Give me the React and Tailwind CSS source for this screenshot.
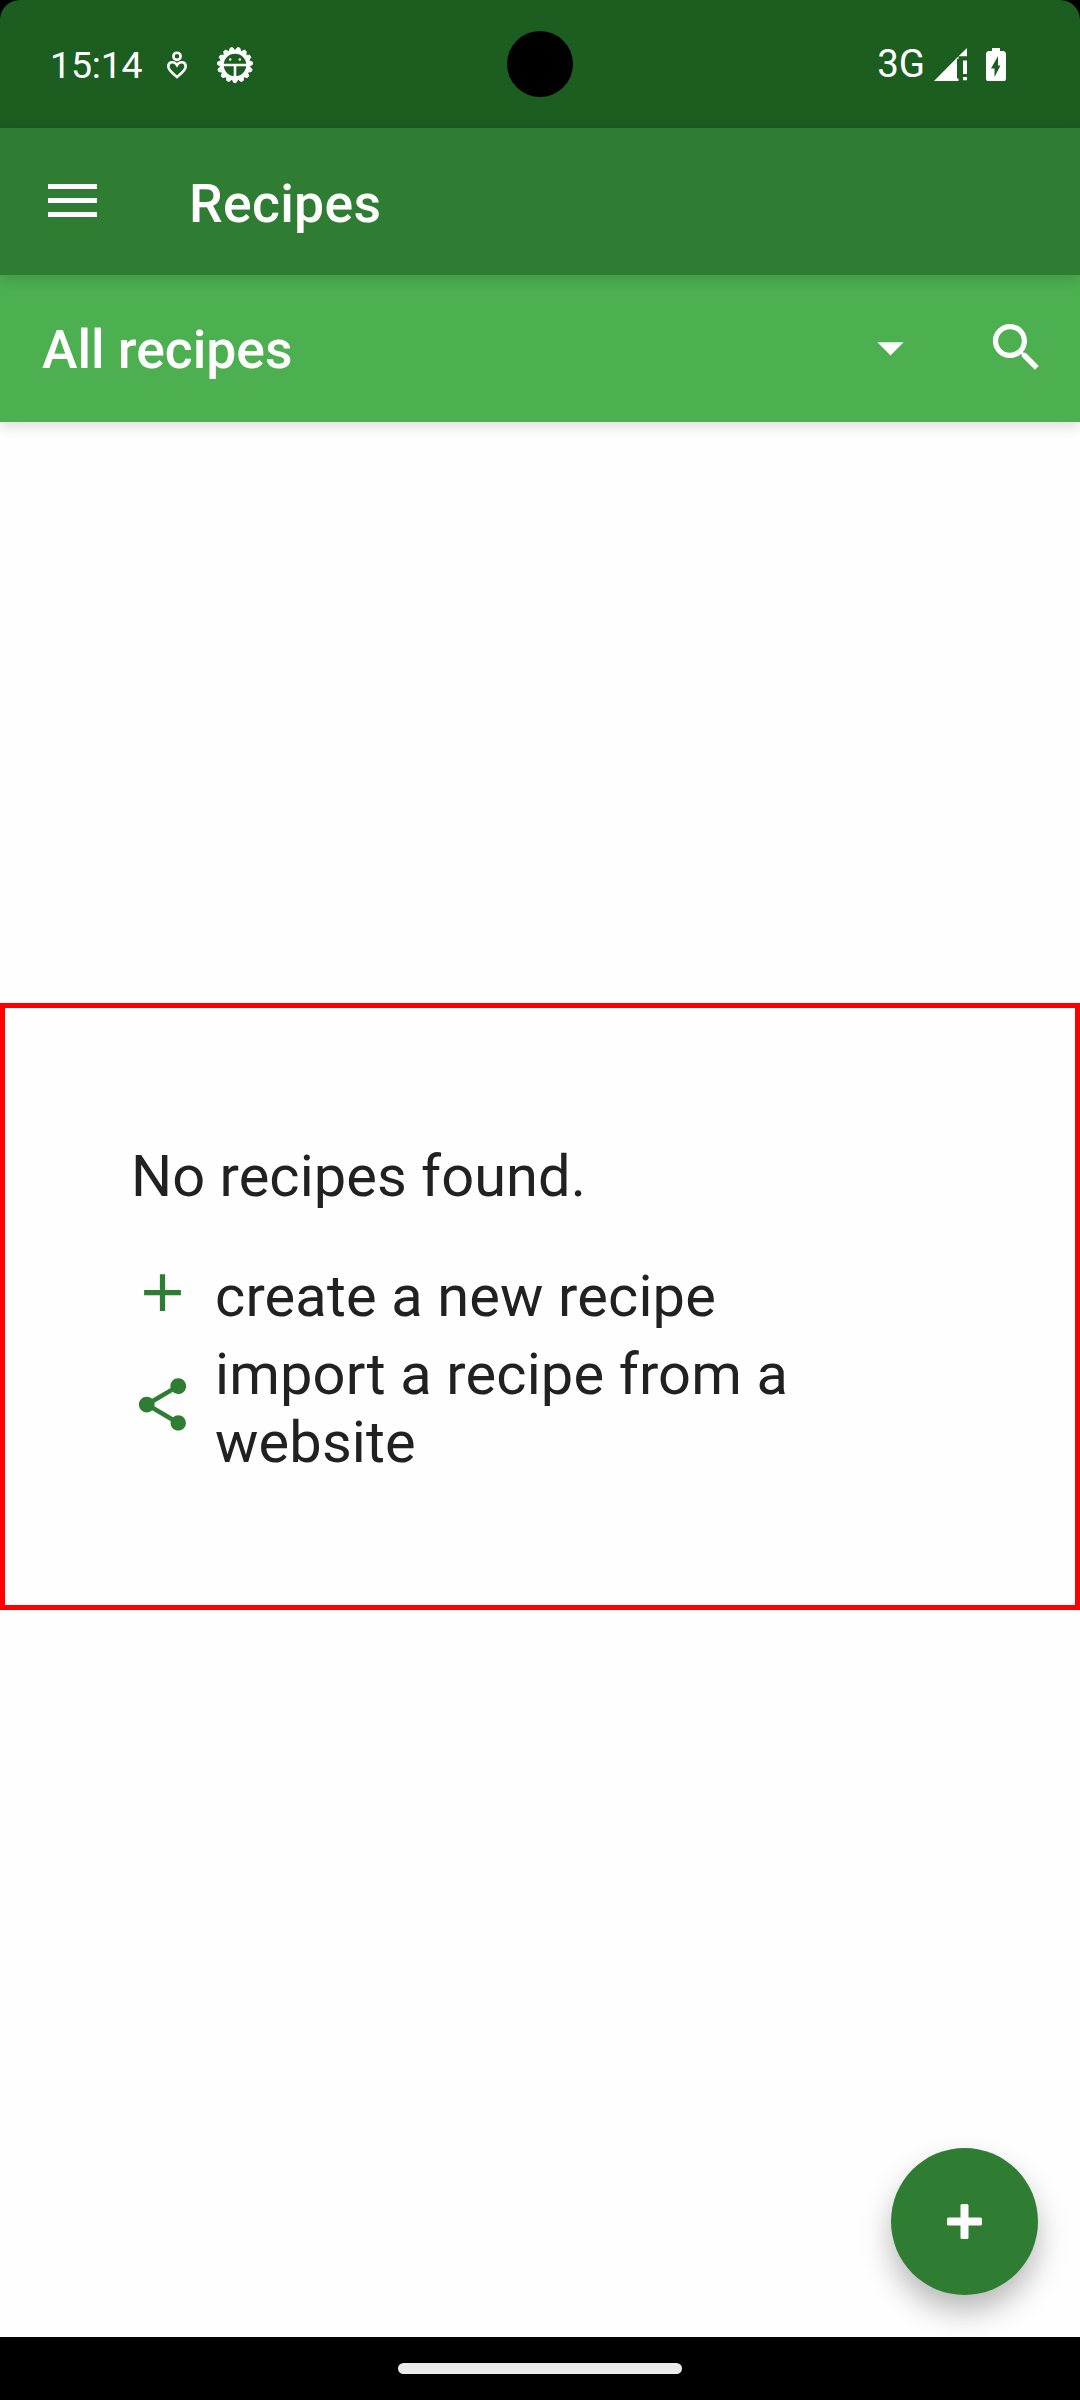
const GEAR_TEETH = Array.from({ length: 15 }, (_, i) => i * 24 + 12);

function StatusBar() {
  return (
    <header className="relative h-32 shrink-0 bg-black text-white">
      <div className="flex h-full items-center rounded-t-[20px] bg-[#1b5e20] pl-[50px] pr-[74px]">
        <span className="w-[95px] pt-1 text-[37.5px] leading-none tracking-[-0.2px]">15:14</span>
        <svg className="ml-[20px] mt-0.5 h-[30px] w-6" viewBox="0 0 24 30" fill="none" stroke="currentColor" strokeWidth="2.6">
          <circle cx="12" cy="6.300" r="3.600" />
          <path d="M12 27C9 24 3.300 20.500 3.300 16.500c0-4.800 6-6 8.700-1.300 2.700-4.700 8.700-3.500 8.700 1.300C20.700 20.500 15 24 12 27z" />
        </svg>
        <svg className="ml-[27px] mt-px h-[38px] w-[38px]" viewBox="-19 -19 38 38">
          {GEAR_TEETH.map((a) => (
            <path key={a} d="M-3.600-13L-1.200-17.600H1.200L3.600-13z" fill="currentColor" stroke="currentColor" strokeWidth="0.800" strokeLinejoin="round" transform={`rotate(${a})`} />
          ))}
          <circle r="13" fill="none" stroke="currentColor" strokeWidth="3.400" />
          <path d="M-12 0H12M0 0V13" stroke="currentColor" strokeWidth="2.600" />
          <circle cx="-4.800" cy="-5.500" r="1.200" fill="currentColor" />
          <circle cx="4.800" cy="-5.500" r="1.200" fill="currentColor" />
        </svg>
        <span className="ml-auto text-[38.5px] font-[450] leading-none">3G</span>
        <svg className="ml-[9px] h-[33px] w-[34px]" viewBox="0 0 34 33" fill="currentColor">
          <path d="M0 33L24.500 8.200V11H23V30.500H24.500V33zM24.500 8.200L33 0V8.200zM29 12.500h4v13.500h-4zM29 29h4v3.200h-4z" />
        </svg>
        <svg className="ml-[18px] h-[33px] w-5" viewBox="0 0 20 33" fill="currentColor" fillRule="evenodd">
          <path d="M6 0h8v3h4l2 2v26l-1 2H1l-1-2V5l2-2h4zM12 8L5 20.500h3.500v8.500L14.500 17.500H12z" />
        </svg>
      </div>
      <div className="absolute left-[507px] top-[31px] h-[66px] w-[66px] rounded-full bg-black" />
    </header>
  );
}

function AppBar() {
  return (
    <div className="relative z-20 flex h-[147px] shrink-0 items-center bg-[#2e7d32] pl-12 text-white shadow-[0_3px_14px_rgba(0,0,0,0.16)]">
      <svg className="mb-0.5 h-[33px] w-[49px]" viewBox="0 0 49 33" fill="currentColor">
        <path d="M0 0h49v5H0zM0 14h49v5H0zM0 28h49v5H0z" />
      </svg>
      <h1 className="ml-[92px] pt-1 text-[53.500px] font-medium leading-none tracking-[0.3px]">Recipes</h1>
    </div>
  );
}

function FilterBar() {
  return (
    <div className="relative z-10 flex h-[147px] shrink-0 items-center bg-[#4caf50] pl-[42px] pr-8 text-white shadow-[0_3px_14px_rgba(0,0,0,0.16)]">
      <span className="pt-[3px] text-[53.500px] font-medium leading-none tracking-[-0.05px]">All recipes</span>
      <svg className="mb-0.5 ml-auto h-[63px] w-[63px]" viewBox="0 0 24 24" fill="currentColor">
        <path d="M7 10l5 5 5-5z" />
      </svg>
      <svg className="mb-0.5 ml-[63px] h-[63px] w-[63px]" viewBox="0 0 24 24" fill="currentColor">
        <path d="M15.500 14h-.79l-.28-.27C15.410 12.590 16 11.110 16 9.500 16 5.910 13.090 3 9.500 3S3 5.910 3 9.500 5.910 16 9.500 16c1.610 0 3.090-.59 4.230-1.570l.27.28v.79l5 4.990L20.490 19l-4.990-5zm-6 0C7.010 14 5 11.990 5 9.500S7.010 5 9.500 5 14 7.010 14 9.500 11.990 14 9.500 14z" />
      </svg>
    </div>
  );
}

function EmptyState() {
  return (
    <section className="mt-[581px] h-[607px] border-[5px] border-[#ff0000] pl-[126px] pt-[134px] text-[57.75px] leading-[68px] tracking-[0.15px] text-[#212121]">
      <p className="tracking-[0.05px]">No recipes found.</p>
      <div className="mt-[52px] flex h-[68px] items-center">
        <svg className="mb-[7px] h-[63px] w-[63px] text-[#2e7d32]" viewBox="0 0 24 24" fill="currentColor">
          <path d="M19 13h-6v6h-2v-6H5v-2h6V5h2v6h6v2z" />
        </svg>
        <span className="ml-[21px]">create a new recipe</span>
      </div>
      <div className="mt-[10px] flex h-[136px] items-center">
        <svg className="mb-[8px] h-[63px] w-[63px] text-[#2e7d32]" viewBox="0 0 24 24" fill="currentColor">
          <path d="M18 16.080c-.76 0-1.440.3-1.960.77L8.910 12.700c.05-.23.09-.46.09-.7s-.04-.47-.09-.7l7.050-4.110c.54.5 1.250.81 2.040.81 1.660 0 3-1.340 3-3s-1.340-3-3-3-3 1.340-3 3c0 .24.04.47.09.7L8.040 9.810C7.500 9.310 6.790 9 6 9c-1.660 0-3 1.340-3 3s1.340 3 3 3c.79 0 1.500-.31 2.040-.81l7.120 4.160c-.05.21-.08.43-.08.65 0 1.610 1.310 2.920 2.920 2.920s2.920-1.310 2.920-2.920-1.310-2.920-2.920-2.920z" />
        </svg>
        <span className="ml-[21px] w-[640px]">import a recipe from a website</span>
      </div>
    </section>
  );
}

export default function App() {
  return (
    <div className="flex h-[2400px] w-[1080px] flex-col overflow-hidden bg-[#fefefe] font-['Roboto',sans-serif]">
      <StatusBar />
      <AppBar />
      <FilterBar />
      <main className="relative flex-1 overflow-hidden">
        <EmptyState />
        <button className="absolute bottom-[42px] right-[42px] flex h-[147px] w-[147px] items-center justify-center rounded-full bg-[#2e7d32] text-white shadow-[0_16px_30px_rgba(0,0,0,0.28)]">
          <svg className="h-[35px] w-[35px]" viewBox="0 0 35 35" fill="currentColor">
            <rect x="13.500" width="8" height="35" rx="1.500" />
            <rect y="13.500" width="35" height="8" rx="1.500" />
          </svg>
        </button>
      </main>
      <footer className="flex h-[63px] shrink-0 items-center justify-center bg-black">
        <div className="h-[11px] w-[284px] rounded-full bg-[#ebebeb]" />
      </footer>
    </div>
  );
}
